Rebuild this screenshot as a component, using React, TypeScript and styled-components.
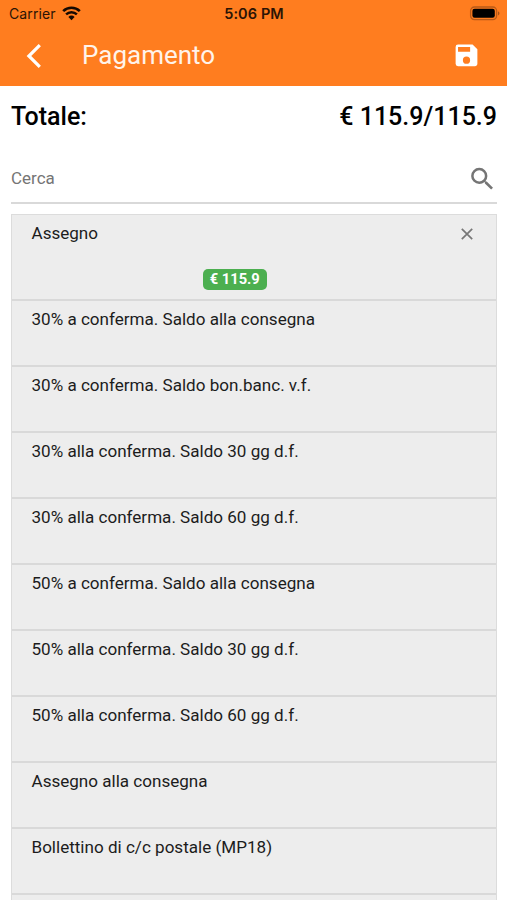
import React from "react";
import styled, { createGlobalStyle } from "styled-components";

const GlobalStyle = createGlobalStyle`
  * { box-sizing: border-box; }
  body { margin: 0; background: #fff; font-family: Roboto, sans-serif; }
`;

const Screen = styled.div`
  width: 507px;
  height: 900px;
  overflow: hidden;
  display: flex;
  flex-direction: column;
  background: #fff;
`;

const Header = styled.header`
  height: 86px;
  flex: none;
  background: #ff7d1f;
`;

const StatusBar = styled.div`
  height: 27px;
  display: grid;
  grid-template-columns: 1fr auto 1fr;
  align-items: center;
  padding: 0 7px 0 9px;
  font-family: Inter, sans-serif;
  color: #2b1405;
`;

const Carrier = styled.div`
  display: flex;
  align-items: center;
  gap: 6px;
  font-size: 14px;
  letter-spacing: 0.1px;
`;

const Clock = styled.div`
  margin-right: 1px;
  font-size: 14.5px;
  font-weight: 600;
  letter-spacing: 0.1px;
`;

const BatterySlot = styled.div`
  display: flex;
  justify-content: flex-end;
  padding-bottom: 1px;
`;

const Toolbar = styled.div`
  height: 58px;
  display: flex;
  align-items: center;
  padding: 0 26px 0 24px;
  color: #fff;
`;

const Title = styled.h1`
  flex: 1;
  margin: -2px 0 0 38px;
  font-size: 26px;
  line-height: 30px;
  font-weight: 400;
  color: #fff3ea;
`;

const IconButton = styled.button`
  display: flex;
  padding: 0;
  border: 0;
  background: none;
  color: inherit;
`;

const TotalRow = styled.div`
  display: flex;
  justify-content: space-between;
  flex: none;
  height: 60px;
  padding: 16px 10px 0 11px;
  font-size: 25px;
  line-height: 30px;
  font-weight: 500;
  color: #000;
`;

const SearchField = styled.label`
  flex: none;
  display: flex;
  align-items: center;
  justify-content: space-between;
  height: 50px;
  margin: 8px 10px 10px 11px;
  border-bottom: 2px solid #d9d9d9;
  color: #757575;
`;

const SearchInput = styled.input`
  flex: 1;
  min-width: 0;
  padding: 0;
  border: 0;
  outline: 0;
  background: none;
  font: 400 17px/20px Roboto, sans-serif;
  &::placeholder { color: #757575; opacity: 1; }
`;

const List = styled.ul`
  flex: none;
  margin: 0 10px 0 11px;
  padding: 0;
  list-style: none;
  background: #ededed;
  border: 1px solid #dcdcdc;
`;

const Item = styled.li<{ $selected?: boolean }>`
  height: ${(p) => (p.$selected ? 86 : 66)}px;
  padding: 8px 22px 0 19.5px;
  border-bottom: 2px solid #d9d9d9;
`;

const ItemHead = styled.div`
  display: flex;
  justify-content: space-between;
  align-items: center;
  height: 20px;
  font-size: 17.07px;
  line-height: 20px;
  color: #1c1c1c;
  white-space: nowrap;
`;

const CloseSlot = styled.span`
  padding-top: 2px;
`;

const AmountRow = styled.div`
  display: flex;
  justify-content: center;
  margin-top: 26px;
  padding-right: 36px;
`;

const Amount = styled.span`
  height: 21px;
  padding: 0 7px;
  border-radius: 5px;
  background: #4caf50;
  color: #fff;
  font-size: 14.7px;
  line-height: 21px;
  font-weight: 700;
`;

const methods = [
  "30% a conferma. Saldo alla consegna",
  "30% a conferma. Saldo bon.banc. v.f.",
  "30% alla conferma. Saldo 30 gg d.f.",
  "30% alla conferma. Saldo 60 gg d.f.",
  "50% a conferma. Saldo alla consegna",
  "50% alla conferma. Saldo 30 gg d.f.",
  "50% alla conferma. Saldo 60 gg d.f.",
  "Assegno alla consegna",
  "Bollettino di c/c postale (MP18)",
];

const WifiIcon = () => (
  <svg width="19" height="16" viewBox="0 0 19 16" fill="none" stroke="#160a02">
    <path d="M1.2 5.1a12 12 0 0 1 16.6 0" strokeWidth="2.7" />
    <path d="M4.1 8.4a7.8 7.8 0 0 1 10.8 0" strokeWidth="2.5" />
    <path d="M6.4 10.9a4.4 4.4 0 0 1 6.2 0L9.5 14.2z" fill="#160a02" stroke="none" />
  </svg>
);

const BatteryIcon = () => (
  <svg width="31" height="15" viewBox="0 0 31 15">
    <rect x="1.6" y="1" width="26" height="12.6" rx="3.8" fill="none" stroke="#b85a18" strokeWidth="1.3" />
    <rect x="3.4" y="2.8" width="22.4" height="9" rx="2.2" fill="#000" />
    <path d="M29 5.2c2 .8 2 3.4 0 4.2z" fill="#a75318" />
  </svg>
);

const BackIcon = () => (
  <svg width="20" height="26" viewBox="0 0 20 26" fill="none" stroke="currentColor" strokeWidth="3.2">
    <path d="M15.8 2.2 4.9 13l10.9 10.8" />
  </svg>
);

const SaveIcon = () => (
  <svg width="29" height="30" viewBox="0 0 24 24" fill="currentColor">
    <path transform="translate(0 -.5)" d="M17 3H5a2 2 0 0 0-2 2v14a2 2 0 0 0 2 2h14c1.1 0 2-.9 2-2V7zm-5 16a3 3 0 1 1 0-6 3 3 0 0 1 0 6zm3-10H5V5h10z" />
  </svg>
);

const SearchIcon = () => (
  <svg width="30" height="30" viewBox="0 0 24 24" fill="currentColor">
    <path transform="translate(.3 .8)" d="M15.5 14h-.79l-.28-.27A6.47 6.47 0 0 0 16 9.5 6.5 6.5 0 1 0 9.5 16c1.61 0 3.09-.59 4.23-1.57l.27.28v.79l5 4.99L20.49 19zm-6 0a4.5 4.5 0 1 1 0-9 4.5 4.5 0 0 1 0 9z" />
  </svg>
);

const CloseIcon = () => (
  <svg width="14" height="14" viewBox="0 0 14 14" fill="none" stroke="#777" strokeWidth="1.7">
    <path d="m1.8 1.8 10.4 10.4M12.2 1.8 1.8 12.2" />
  </svg>
);

export default function App() {
  return (
    <Screen>
      <GlobalStyle />
      <Header>
        <StatusBar>
          <Carrier>Carrier <WifiIcon /></Carrier>
          <Clock>5:06 PM</Clock>
          <BatterySlot><BatteryIcon /></BatterySlot>
        </StatusBar>
        <Toolbar>
          <IconButton aria-label="Indietro"><BackIcon /></IconButton>
          <Title>Pagamento</Title>
          <IconButton aria-label="Salva"><SaveIcon /></IconButton>
        </Toolbar>
      </Header>
      <TotalRow>
        <span>Totale:</span>
        <span>€ 115.9/115.9</span>
      </TotalRow>
      <SearchField>
        <SearchInput placeholder="Cerca" />
        <SearchIcon />
      </SearchField>
      <List>
        <Item $selected>
          <ItemHead>
            <span>Assegno</span>
            <CloseSlot>
              <IconButton aria-label="Rimuovi"><CloseIcon /></IconButton>
            </CloseSlot>
          </ItemHead>
          <AmountRow><Amount>€ 115.9</Amount></AmountRow>
        </Item>
        {methods.map((name) => (
          <Item key={name}>
            <ItemHead>{name}</ItemHead>
          </Item>
        ))}
        <Item />
      </List>
    </Screen>
  );
}
